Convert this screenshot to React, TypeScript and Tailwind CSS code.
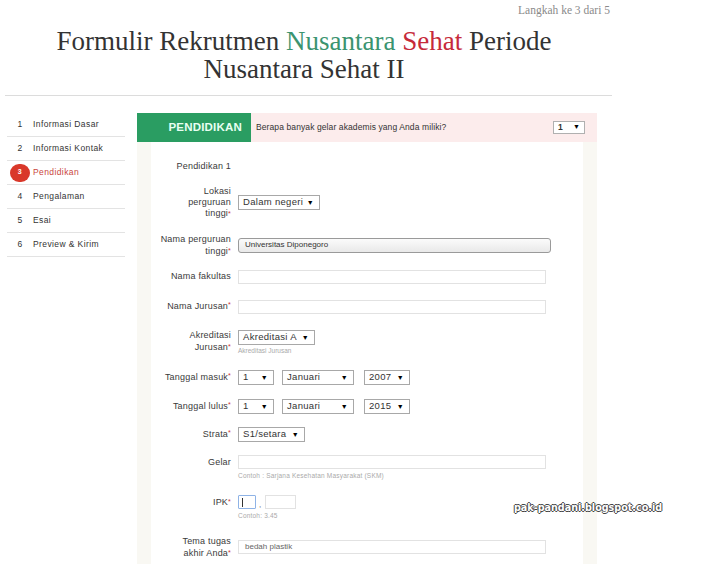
import React from "react";

function Sel({ w, text }: { w: string; text: string }) {
  return (
    <div className={`${w} h-[15px] border border-[#a8a8a8] bg-white flex items-center justify-between pl-[4px] pr-[5px] text-[9.5px] text-[#333] tracking-[0.3px]`}>
      <span>{text}</span>
      <span className="text-[7px] text-black leading-none">▼</span>
    </div>
  );
}

function Label({ children, className = "" }: { children: React.ReactNode; className?: string }) {
  return (
    <div className={`w-[80px] shrink-0 text-right text-[9px] text-[#3a3a3a] tracking-[0.2px] ${className}`}>{children}</div>
  );
}

const Req = () => <span className="text-[#c33] text-[7px] align-top">*</span>;

function TextIn({ value = "" }: { value?: string }) {
  return (
    <div className="w-[308px] h-[14px] border border-[#e2e2e2] bg-white flex items-center pl-[6px] text-[8px] text-[#666]">
      {value}
    </div>
  );
}

export default function App() {
  const nav = ["Informasi Dasar", "Informasi Kontak", "Pendidikan", "Pengalaman", "Esai", "Preview & Kirim"];
  return (
    <div className="w-[719px] h-[579px] bg-white relative overflow-hidden font-['Liberation_Sans',sans-serif]">
      <div className="w-[612px]">
        <div className="h-[20px] text-right leading-[20px] text-[11.5px] text-[#8a8a8a] font-['Liberation_Serif',serif] pr-[2px]">
          Langkah ke 3 dari 5
        </div>
        <div className="mt-[7px] text-center font-['Liberation_Serif',serif] text-[27px] leading-[28px] text-[#333] pr-[4px]">
          <div>
            Formulir Rekrutmen <span className="text-[#3b9470]">Nusantara</span>{" "}
            <span className="text-[#c62a3a]">Sehat</span> Periode
          </div>
          <div>Nusantara Sehat II</div>
        </div>
        <div className="mt-[12px] ml-[5px] border-t border-[#dcdcdc]" />
      </div>

      <div className="flex mt-[17px]">
        <div className="w-[118px] ml-[7px]">
          {nav.map((n, i) => {
            const active = i === 2;
            return (
              <div key={n} className="h-[24px] border-b border-[#e3e3e3] flex items-center text-[8.5px] tracking-[0.4px]">
                {active ? (
                  <div className="w-[20px] h-[18px] ml-[3px] rounded-full bg-[#d9382a] text-white flex items-center justify-center text-[7px] font-bold">3</div>
                ) : (
                  <div className="w-[20px] ml-[3px] text-center text-[#333]">{i + 1}</div>
                )}
                <span className={`ml-[3px] ${active ? "text-[#c9453c]" : "text-[#333]"}`}>{n}</span>
              </div>
            );
          })}
        </div>

        <div className="w-[460px] ml-[12px]">
          <div className="h-[29px] flex">
            <div className="w-[114px] bg-[#2a9d62] flex items-center justify-end pr-[9px] text-[11.5px] font-bold text-[#e8fff2] tracking-[0.2px]">
              PENDIDIKAN
            </div>
            <div className="flex-1 bg-[#fcecec] flex items-center justify-between pl-[5px] pr-[12px]">
              <span className="text-[8.5px] text-[#333] tracking-[0.1px]">Berapa banyak gelar akademis yang Anda miliki?</span>
              <div className="w-[32px] h-[13px] border border-[#b0b0b0] bg-white flex items-center justify-between pl-[4px] pr-[4px] text-[8.5px] font-bold text-[#333]">
                <span>1</span>
                <span className="text-[7px] text-black">▼</span>
              </div>
            </div>
          </div>

          <div className="bg-[#f9f8f3] px-[14px]">
            <div className="bg-white pt-[18px] pb-[5px] flex flex-col">
              <div className="flex h-[12px] items-center">
                <Label className="leading-[12px]">Pendidikan 1</Label>
              </div>
              <div className="flex mt-[14px] items-center gap-[7px]">
                <Label className="leading-[11px]">Lokasi<br />perguruan<br />tinggi<Req /></Label>
                <Sel w="w-[82px]" text="Dalam negeri" />
              </div>
              <div className="flex mt-[14px] items-center gap-[7px]">
                <Label className="leading-[12px]">Nama perguruan<br />tinggi<Req /></Label>
                <div className="w-[313px] h-[15px] rounded-[3px] border border-[#9a9a9a] bg-gradient-to-b from-[#fbfbfb] to-[#e9e9e9] flex items-center pl-[6px] text-[8px] text-[#333]">
                  Universitas Diponegoro
                </div>
              </div>
              <div className="flex mt-[13px] items-center gap-[7px] h-[14px]">
                <Label>Nama fakultas</Label>
                <TextIn />
              </div>
              <div className="flex mt-[16px] items-center gap-[7px] h-[14px]">
                <Label>Nama Jurusan<Req /></Label>
                <TextIn />
              </div>
              <div className="flex mt-[15px] items-start gap-[7px]">
                <Label className="leading-[12px]">Akreditasi<br />Jurusan<Req /></Label>
                <div className="mt-[1px]">
                  <Sel w="w-[77px]" text="Akreditasi A" />
                  <div className="text-[6.5px] text-[#aaa] leading-[9px] mt-[1px]">Akreditasi Jurusan</div>
                </div>
              </div>
              <div className="flex mt-[15px] items-center gap-[7px] h-[15px]">
                <Label>Tanggal masuk<Req /></Label>
                <div className="flex">
                  <Sel w="w-[36px]" text="1" />
                  <div className="ml-[8px]"><Sel w="w-[72px]" text="Januari" /></div>
                  <div className="ml-[10px]"><Sel w="w-[46px]" text="2007" /></div>
                </div>
              </div>
              <div className="flex mt-[14px] items-center gap-[7px] h-[15px]">
                <Label>Tanggal lulus<Req /></Label>
                <div className="flex">
                  <Sel w="w-[36px]" text="1" />
                  <div className="ml-[8px]"><Sel w="w-[72px]" text="Januari" /></div>
                  <div className="ml-[10px]"><Sel w="w-[46px]" text="2015" /></div>
                </div>
              </div>
              <div className="flex mt-[13px] items-center gap-[7px] h-[15px]">
                <Label>Strata<Req /></Label>
                <Sel w="w-[67px]" text="S1/setara" />
              </div>
              <div className="flex mt-[13px] items-start gap-[7px]">
                <Label className="leading-[14px]">Gelar</Label>
                <div>
                  <TextIn />
                  <div className="text-[6.5px] text-[#aaa] leading-[12px] mt-[1px] tracking-[0.2px]">Contoh : Sarjana Kesehatan Masyarakat (SKM)</div>
                </div>
              </div>
              <div className="flex mt-[13px] items-start gap-[7px]">
                <Label className="leading-[14px]">IPK<Req /></Label>
                <div>
                  <div className="flex items-end h-[14px]">
                    <div className="w-[18px] h-[14px] border border-[#8fb3e6] rounded-[1px] bg-white flex items-center pl-[3px]">
                      <div className="w-[1px] h-[9px] bg-[#333]" />
                    </div>
                    <span className="mx-[3px] text-[8px] text-[#666] leading-none">,</span>
                    <div className="w-[31px] h-[14px] border border-[#e2e2e2] bg-white ml-[1px]" />
                  </div>
                  <div className="text-[6.5px] text-[#aaa] leading-[12px] mt-[1px] tracking-[0.2px]">Contoh: 3.45</div>
                </div>
              </div>
              <div className="flex mt-[13px] items-center gap-[7px]">
                <Label className="leading-[12px]">Tema tugas<br />akhir Anda<Req /></Label>
                <TextIn value="bedah plastik" />
              </div>
            </div>
          </div>
        </div>
      </div>

      <div className="absolute left-[514px] top-[501px] text-[9.6px] font-bold font-['DejaVu_Sans',sans-serif] text-white [text-shadow:-1px_0_#444,1px_0_#444,0_-1px_#444,0_1px_#444]">
        pak-pandani.blogspot.co.id
      </div>
    </div>
  );
}
